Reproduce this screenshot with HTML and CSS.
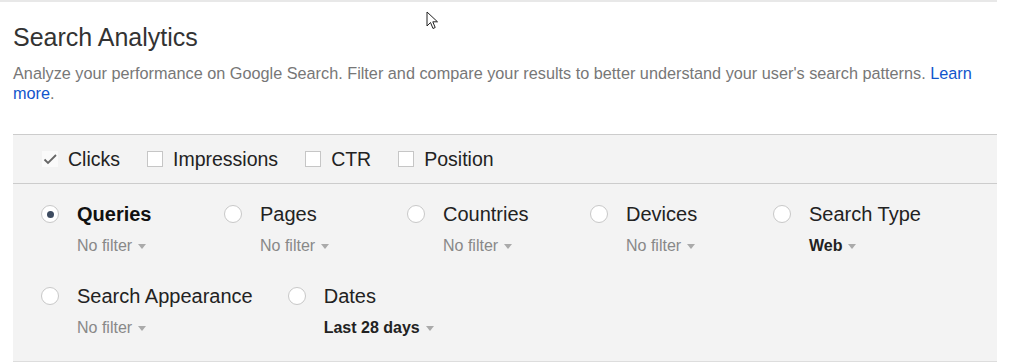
FILE: index.html
```html
<!DOCTYPE html>
<html lang="en">
<head>
    <meta charset="UTF-8">
    <meta name="viewport" content="width=device-width, initial-scale=1.0">
    <title>Search Analytics</title>
    <link rel="stylesheet" href="styles.css">
</head>
<body>
    <div class="topline"></div>
    <div class="page">
        <h1 class="title">Search Analytics</h1>
        <p class="intro">Analyze your performance on Google Search. Filter and compare your results to better understand your user's search patterns. <a href="#">Learn more</a>.</p>

        <div class="panel">
            <div class="metrics">
                <div class="metric">
                    <span class="box checked">
                        <svg width="16" height="16" viewBox="0 0 16 16"><path d="M2.5 8.5 L6 12 L14 4" fill="none" stroke="#666" stroke-width="1.8"/></svg>
                    </span>
                    Clicks
                </div>
                <div class="metric"><span class="box"></span>Impressions</div>
                <div class="metric"><span class="box"></span>CTR</div>
                <div class="metric"><span class="box"></span>Position</div>
            </div>

            <div class="dimensions">
                <div class="dim">
                    <span class="radio selected"></span>
                    <div>
                        <div class="dim-name active">Queries</div>
                        <div class="dim-filter">No filter<span class="caret"></span></div>
                    </div>
                </div>
                <div class="dim">
                    <span class="radio"></span>
                    <div>
                        <div class="dim-name">Pages</div>
                        <div class="dim-filter">No filter<span class="caret"></span></div>
                    </div>
                </div>
                <div class="dim">
                    <span class="radio"></span>
                    <div>
                        <div class="dim-name">Countries</div>
                        <div class="dim-filter">No filter<span class="caret"></span></div>
                    </div>
                </div>
                <div class="dim">
                    <span class="radio"></span>
                    <div>
                        <div class="dim-name">Devices</div>
                        <div class="dim-filter">No filter<span class="caret"></span></div>
                    </div>
                </div>
                <div class="dim">
                    <span class="radio"></span>
                    <div>
                        <div class="dim-name">Search Type</div>
                        <div class="dim-filter set">Web<span class="caret"></span></div>
                    </div>
                </div>
                <div class="dim">
                    <span class="radio"></span>
                    <div>
                        <div class="dim-name">Search Appearance</div>
                        <div class="dim-filter">No filter<span class="caret"></span></div>
                    </div>
                </div>
                <div class="dim">
                    <span class="radio"></span>
                    <div>
                        <div class="dim-name">Dates</div>
                        <div class="dim-filter set">Last 28 days<span class="caret"></span></div>
                    </div>
                </div>
            </div>
        </div>
    </div>

    <svg class="cursor" width="14" height="20" viewBox="0 0 14 20">
        <path d="M1 1 L1 15 L4.5 11.5 L7 17.5 L9.2 16.5 L6.8 10.8 L11.5 10.8 Z" fill="#fff" stroke="#222" stroke-width="1"/>
    </svg>
</body>
</html>
```

FILE: styles.css
```css
* {
    box-sizing: border-box;
    margin: 0;
    padding: 0;
}

body {
    font-family: "Liberation Sans", Arial, sans-serif;
    background: #ffffff;
    color: #222222;
}

.topline {
    width: 997px;
    height: 2px;
    background: #e8e8e8;
}

.page {
    width: 984px;
    margin-left: 13px;
}

.title {
    margin-top: 22px;
    font-size: 25px;
    font-weight: normal;
    line-height: 26px;
    color: #333333;
}

.intro {
    margin-top: 13px;
    font-size: 16.25px;
    line-height: 20px;
    color: #777777;
}

.intro a {
    color: #1155cc;
    text-decoration: none;
}

.panel {
    margin-top: 31px;
    background: #f3f3f3;
    border-top: 1px solid #cccccc;
    border-bottom: 1px solid #dddddd;
}

.metrics {
    display: flex;
    align-items: center;
    gap: 27px;
    height: 49px;
    padding-left: 29px;
    border-bottom: 1px solid #cccccc;
    font-size: 19.5px;
}

.metric {
    display: flex;
    align-items: center;
}

.box {
    width: 16px;
    height: 16px;
    margin-right: 10px;
    background: #ffffff;
    border: 1px solid #c6c6c6;
}

.box.checked {
    border: none;
    background: #fafafa;
}

.box svg {
    display: block;
}

.dimensions {
    display: flex;
    flex-wrap: wrap;
    column-gap: 35px;
    row-gap: 28px;
    padding: 18px 0 23px 28px;
}

.dim {
    display: flex;
    gap: 18px;
    min-width: 148px;
}

.radio {
    flex: none;
    width: 18px;
    height: 18px;
    margin-top: 3px;
    border-radius: 50%;
    background: #ffffff;
    border: 1px solid #c8c8c8;
    display: flex;
    align-items: center;
    justify-content: center;
}

.radio.selected::after {
    content: "";
    width: 7px;
    height: 7px;
    border-radius: 50%;
    background: #3d4b60;
}

.dim-name {
    font-size: 20px;
    line-height: 24px;
    color: #222222;
}

.dim-name.active {
    font-weight: bold;
    color: #111111;
}

.dim-filter {
    margin-top: 10px;
    font-size: 16px;
    line-height: 20px;
    color: #888888;
    display: flex;
    align-items: center;
}

.dim-filter.set {
    font-weight: bold;
    color: #222222;
}

.caret {
    margin-left: 6px;
    margin-top: 1px;
    border-left: 4.5px solid transparent;
    border-right: 4.5px solid transparent;
    border-top: 5px solid #aaaaaa;
}

.cursor {
    position: absolute;
    left: 426px;
    top: 11px;
}
```
